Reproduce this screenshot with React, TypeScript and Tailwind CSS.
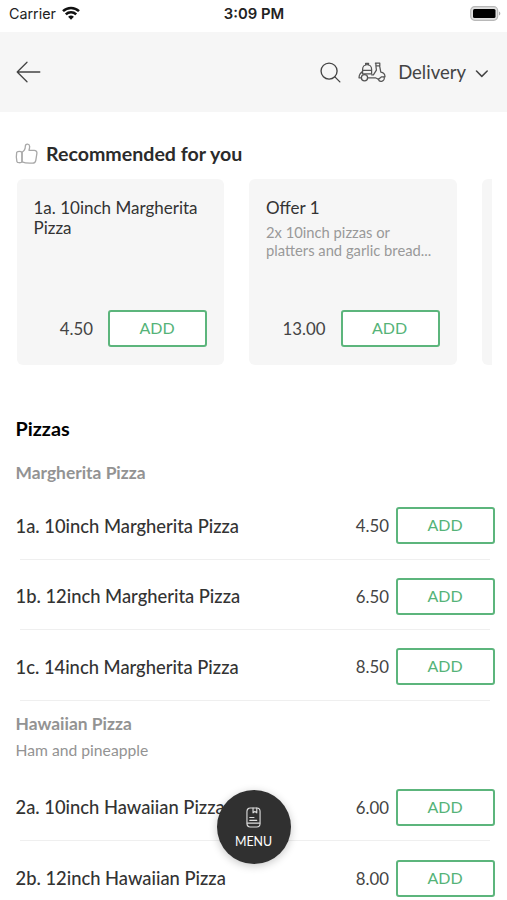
type Item = { name: string; price: string };

function AddButton() {
  return (
    <button className="h-[37px] w-[99px] shrink-0 rounded-[3px] border-2 border-[#5cb57c] bg-white pr-px pb-px text-[16px] leading-none text-[#55b378]">
      ADD
    </button>
  );
}

function Row({ name, price }: Item) {
  return (
    <div className="flex h-[70.6px] flex-col">
      <div className="flex flex-1 items-center pt-[4px] pr-3 pl-[15.5px]">
        <span className="flex-1 pt-px whitespace-nowrap text-[18.35px] font-medium text-[#333]">{name}</span>
        <span className="mr-[7px] text-[16.8px] text-[#444]">{price}</span>
        <AddButton />
      </div>
      <div className="mr-[17px] ml-5 h-px shrink-0 bg-[#efefef]" />
    </div>
  );
}

function Card({ title, note, price }: { title: string; note?: string; price: string }) {
  return (
    <article className="flex h-[186px] w-[207.5px] shrink-0 flex-col rounded-[6px] bg-[#f6f6f6] px-[17px] pt-[18.5px] pb-[18px]">
      <h3 className="text-[17px] leading-[20.5px] text-[#333]">{title}</h3>
      {note && (
        <p className="mt-[6px] text-[14.75px] leading-[17.5px] whitespace-pre-line text-[#999]">{note}</p>
      )}
      <div className="mt-auto flex items-center justify-end gap-[15px]">
        <span className="text-[16.8px] text-[#444]">{price}</span>
        <AddButton />
      </div>
    </article>
  );
}

function StatusBar() {
  return (
    <div className="grid h-8 grid-cols-3 items-start pr-[6px] pl-[9px] font-['Inter','Liberation_Sans',sans-serif] text-[#222]">
      <div className="flex items-center gap-[6px] pt-[4px]">
        <span className="text-[14.3px] leading-[20px]">Carrier</span>
        <svg width="18" height="14" viewBox="0 0 18 14" className="-mt-[2px]" fill="none" stroke="#111" strokeWidth="2.5">
          <path d="M1 5.2a11.5 11.5 0 0 1 16 0" />
          <path d="M3.8 8.4a7.4 7.4 0 0 1 10.4 0" />
          <path d="M6.1 10.8a4.2 4.2 0 0 1 5.8 0L9 13.7Z" fill="#111" stroke="none" />
        </svg>
      </div>
      <span className="pt-[4px] pr-[2px] text-center text-[14.8px] leading-[20px] font-semibold whitespace-nowrap">3:09 PM</span>
      <svg width="31" height="16" viewBox="0 0 31 16" className="mt-[5.5px] justify-self-end">
        <rect x="0.7" y="0.7" width="27" height="13.6" rx="4" fill="#e0e0e0" stroke="#b8b8b8" strokeWidth="1.2" />
        <rect x="3" y="3" width="22.5" height="9" rx="1.5" fill="#000" />
        <path d="M29 5.5c1.8.8 1.8 3.2 0 4Z" fill="#aaa" />
      </svg>
    </div>
  );
}

function Header() {
  return (
    <header className="flex h-20 items-center bg-[#f6f6f6] pr-[18px] pl-4 text-[#444]">
      <svg width="25" height="22" viewBox="0 0 25 22" fill="none" stroke="currentColor" strokeWidth="1.3" strokeLinecap="round" strokeLinejoin="round">
        <path d="M11 1.2 1.2 11 11 20.8M1.2 11H23.8" />
      </svg>
      <svg className="ml-auto" width="21" height="21" viewBox="0 0 22 22" fill="none" stroke="currentColor" strokeWidth="1.4" strokeLinecap="round">
        <circle cx="9.5" cy="9.5" r="8.4" />
        <path d="m15.6 15.6 5.2 5.2" />
      </svg>
      <svg className="ml-[17px]" width="28" height="20" viewBox="0 0 28 20" fill="none" stroke="#555" strokeWidth="1.25" strokeLinejoin="round" strokeLinecap="round">
        <path d="M4.6 8.4V7.2a4.5 4.5 0 0 1 9 0v1.2M7.6 3V1.4h3V3M4.6 8.4h9v3.4h-9Z" />
        <path d="M4.4 9.6C2.4 10.8 1.2 12.8 1 15.8h2.3M9.7 15.8h7.6l3.2 1.4" />
        <path d="M17.4 1.2h4.4v2.6h-3.9V1.2M17.9 3.8l.5 4.4-3 4.6h-1.8M21.6 3.8l1.2 6.4c2.6.4 4.2 2.2 4.2 4.6h-3.4l-3.1 2.4" />
        <circle cx="6.5" cy="15.8" r="3.1" />
        <path d="M20.3 17.2a3 3 0 0 0 5.8-2" />
      </svg>
      <span className="ml-3 text-[18.5px] leading-6">Delivery</span>
      <svg className="mt-[3px] ml-[9px]" width="14" height="8" viewBox="0 0 14 8" fill="none" stroke="currentColor" strokeWidth="1.5" strokeLinecap="round" strokeLinejoin="round">
        <path d="m1.5 1 5.3 5.4L12.2 1" />
      </svg>
    </header>
  );
}

export default function App() {
  return (
    <div className="relative h-[900px] w-full overflow-hidden bg-white font-['Lato','Noto_Sans',sans-serif]">
      <StatusBar />
      <Header />

      <section className="pt-[29px]">
        <div className="flex h-[26px] items-center pl-[15px]">
          <svg width="23" height="22" viewBox="0 0 23 22" fill="none" stroke="#a8a8a8" strokeWidth="1.3" strokeLinejoin="round" strokeLinecap="round">
            <path d="M7 9.2c-1-1-5-1.2-5.3.2-.5 2.8-.4 6.6.2 9.2.4 1.5 4.3 1.4 5.1.3Z" />
            <path d="M7 9.2C9.1 7.9 10.3 6 10.3 3.4c0-2.8 4-3.1 4.3-.2.2 1.4-.2 2.8-.6 4.1h5.2c1.8 0 3 1.4 2.7 3.1l-1.1 6.9c-.3 1.7-1.5 2.8-3.2 2.8-3.5.2-7.6.1-10.6-1.2Z" />
          </svg>
          <h2 className="ml-2 text-[19.6px] font-bold text-[#2b2b2b]">Recommended for you</h2>
        </div>
        <div className="mt-3 mr-[15px] ml-[16.5px] flex gap-[25px] overflow-hidden">
          <Card title="1a. 10inch Margherita Pizza" price="4.50" />
          <Card title="Offer 1" note={"2x 10inch pizzas or\nplatters and garlic bread..."} price="13.00" />
          <div className="h-[186px] w-[207.5px] shrink-0 rounded-[6px] bg-[#f6f6f6]" />
        </div>
      </section>

      <section>
        <h2 className="mt-[51px] pl-[15.5px] text-[19.8px] leading-6 font-bold text-black">Pizzas</h2>
        <h3 className="mt-[21px] pl-[15.5px] text-[17.4px] leading-6 font-bold text-[#939393]">Margherita Pizza</h3>
        <div className="mt-[4px]">
          <Row name="1a. 10inch Margherita Pizza" price="4.50" />
          <Row name="1b. 12inch Margherita Pizza" price="6.50" />
          <Row name="1c. 14inch Margherita Pizza" price="8.50" />
        </div>
        <h3 className="mt-[11px] pl-[15.5px] text-[17.4px] leading-6 font-bold text-[#939393]">Hawaiian Pizza</h3>
        <p className="mt-[2px] pl-[15.5px] text-[15.7px] leading-6 text-[#939393]">Ham and pineapple</p>
        <div className="mt-[9px]">
          <Row name="2a. 10inch Hawaiian Pizza" price="6.00" />
          <Row name="2b. 12inch Hawaiian Pizza" price="8.00" />
        </div>
      </section>

      <button className="absolute top-[790px] left-[217px] flex size-[74px] flex-col items-center rounded-full bg-[#303030] pt-[17px] pr-px text-white shadow-[0_2px_8px_rgba(0,0,0,0.22)]">
        <svg width="15" height="21" viewBox="0 0 16 21" preserveAspectRatio="none" fill="none" stroke="#ddd" strokeWidth="1.2" strokeLinecap="round" strokeLinejoin="round">
          <rect x="1" y="1" width="14" height="19" rx="3.5" />
          <path d="M7.5 1.2v4.6l2-1.4 2 1.4V1.2M4 10.5h4.5M4 13.3h7.5M1.5 16.2h13" />
        </svg>
        <span className="mt-[6px] text-[12.4px] leading-4">MENU</span>
      </button>
    </div>
  );
}
